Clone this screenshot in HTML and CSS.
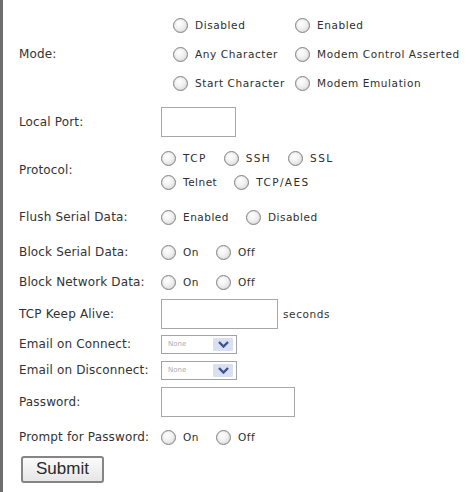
FILE: index.html
```html
<!DOCTYPE html>
<html lang="en">
  <head>
    <meta charset="UTF-8" />
    <meta name="viewport" content="width=device-width, initial-scale=1.0" />
    <title>Serial Port Settings</title>
    <link rel="stylesheet" href="styles.css">
  </head>
  <body>
    <div class="page">
      <form class="settings" onsubmit="return false;">
        <div class="label">Mode:</div>
        <div class="mode-options">
          <label class="opt"><input type="radio" name="mode" />Disabled</label>
          <label class="opt"><input type="radio" name="mode" />Enabled</label>
          <label class="opt"><input type="radio" name="mode" />Any Character</label>
          <label class="opt"><input type="radio" name="mode" />Modem Control Asserted</label>
          <label class="opt"><input type="radio" name="mode" />Start Character</label>
          <label class="opt"><input type="radio" name="mode" />Modem Emulation</label>
        </div>

        <div class="label">Local Port:</div>
        <div class="control"><input class="field port" type="text" /></div>

        <div class="label">Protocol:</div>
        <div class="stack">
          <div class="opts">
            <label class="opt caps"><input type="radio" name="proto" />TCP</label>
            <label class="opt caps"><input type="radio" name="proto" />SSH</label>
            <label class="opt caps"><input type="radio" name="proto" />SSL</label>
          </div>
          <div class="opts">
            <label class="opt"><input type="radio" name="proto" />Telnet</label>
            <label class="opt caps"><input type="radio" name="proto" />TCP/AES</label>
          </div>
        </div>

        <div class="label">Flush Serial Data:</div>
        <div class="opts">
          <label class="opt"><input type="radio" name="flush" />Enabled</label>
          <label class="opt"><input type="radio" name="flush" />Disabled</label>
        </div>

        <div class="label">Block Serial Data:</div>
        <div class="opts">
          <label class="opt"><input type="radio" name="bserial" />On</label>
          <label class="opt"><input type="radio" name="bserial" />Off</label>
        </div>

        <div class="label">Block Network Data:</div>
        <div class="opts">
          <label class="opt"><input type="radio" name="bnet" />On</label>
          <label class="opt"><input type="radio" name="bnet" />Off</label>
        </div>

        <div class="label">TCP Keep Alive:</div>
        <div class="control">
          <input class="field keepalive" type="text" />
          <span class="unit">seconds</span>
        </div>

        <div class="label">Email on Connect:</div>
        <div class="control">
          <span class="dropdown">
            <select><option>None</option></select>
            <span class="arrow">
              <svg width="11" height="7" viewBox="0 0 11 7"><path d="M1 1 L5.5 5.5 L10 1" fill="none" stroke="#3d5196" stroke-width="2.4" /></svg>
            </span>
          </span>
        </div>

        <div class="label">Email on Disconnect:</div>
        <div class="control">
          <span class="dropdown">
            <select><option>None</option></select>
            <span class="arrow">
              <svg width="11" height="7" viewBox="0 0 11 7"><path d="M1 1 L5.5 5.5 L10 1" fill="none" stroke="#3d5196" stroke-width="2.4" /></svg>
            </span>
          </span>
        </div>

        <div class="label">Password:</div>
        <div class="control"><input class="field password" type="password" /></div>

        <div class="label">Prompt for Password:</div>
        <div class="opts">
          <label class="opt"><input type="radio" name="prompt" />On</label>
          <label class="opt"><input type="radio" name="prompt" />Off</label>
        </div>

        <div class="submit-row">
          <button type="submit" class="submit">Submit</button>
        </div>
      </form>
    </div>
  </body>
</html>
```

FILE: styles.css
```css
body {
  margin: 0;
  background-color: #fff;
  color: #333;
  font-family: "DejaVu Sans", Verdana, sans-serif;
}
.page {
  border-left: 3px solid #6f6f6f;
  min-height: 492px;
  box-sizing: border-box;
  padding: 8px 0 0 16px;
}
.settings {
  display: grid;
  grid-template-columns: 142px auto;
  grid-template-rows: 92px 44px 52px 42px 28px 32px 32px 28px 24px 40px 30px 34px;
  align-items: center;
}
.label {
  font-size: 12px;
  letter-spacing: 0.15px;
  color: #333;
}
.control {
  display: flex;
  align-items: center;
}

/* radio groups */
.mode-options {
  display: grid;
  grid-template-columns: 122px auto;
  grid-auto-rows: 29px;
  align-items: center;
  padding-left: 12px;
}
.stack {
  display: grid;
  grid-auto-rows: 24px;
  align-items: center;
}
.opts {
  display: flex;
  align-items: center;
  gap: 17px;
}
.opt {
  display: inline-flex;
  align-items: center;
  gap: 7px;
  font-size: 10.5px;
  letter-spacing: 0.5px;
  color: #2e2e2e;
  white-space: nowrap;
}
.mode-options .opt {
  letter-spacing: 0.6px;
}
.opt.caps {
  letter-spacing: 1.4px;
}
.opt input {
  appearance: none;
  -webkit-appearance: none;
  margin: 0;
  width: 15px;
  height: 15px;
  border: 1px solid #838383;
  border-radius: 50%;
  background: radial-gradient(circle at 40% 35%, #ffffff 0%, #f0f0f0 45%, #d2d2d2 100%);
  box-shadow: inset 0 0 1px #bdbdbd;
}

/* text boxes */
.field {
  box-sizing: border-box;
  height: 30px;
  margin: 0;
  border: 1px solid #a7a7a7;
  background: #fff;
}
.port {
  width: 75px;
}
.keepalive {
  width: 117px;
}
.password {
  width: 134px;
}
.unit {
  margin-left: 5px;
  font-size: 10.5px;
  letter-spacing: 0.6px;
}

/* drop downs */
.dropdown {
  display: flex;
  align-items: center;
  box-sizing: border-box;
  width: 76px;
  height: 19px;
  padding: 1px 3px 1px 2px;
  border: 1px solid #a3a3a3;
  background: #fff;
}
.dropdown select {
  appearance: none;
  -webkit-appearance: none;
  flex: 1;
  min-width: 0;
  border: none;
  background: transparent;
  padding: 0 0 0 4px;
  font-family: "DejaVu Sans", sans-serif;
  font-size: 7px;
  color: #adadad;
}
.arrow {
  display: flex;
  align-items: center;
  justify-content: center;
  width: 20px;
  height: 13px;
  background: #d9e0f2;
  border-radius: 1px;
}

.submit-row {
  grid-column: 1 / 3;
}
.submit {
  margin-left: 2px;
  width: 83px;
  height: 27px;
  border: 2px solid #858585;
  border-radius: 3px;
  background: linear-gradient(#fbfbfb, #e6e6e6);
  font-family: "Liberation Sans", Arial, sans-serif;
  font-size: 17px;
  color: #2a2a2a;
  padding: 0;
}
```
